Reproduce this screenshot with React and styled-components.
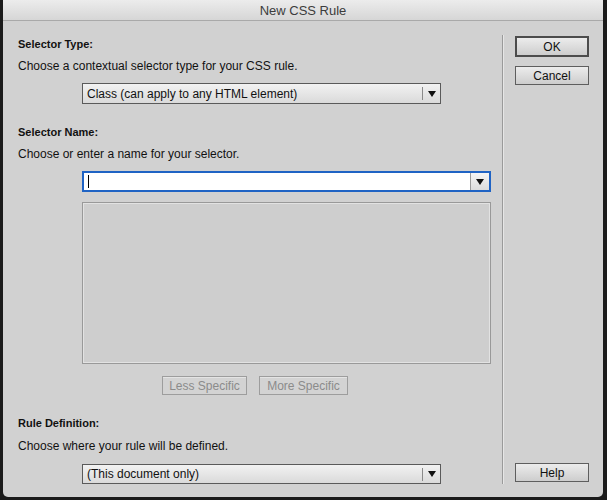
import React from 'react';
import styled, { createGlobalStyle } from 'styled-components';

const GlobalStyle = createGlobalStyle`
  html, body {
    margin: 0;
    padding: 0;
    background: #1b1b1b;
    font-family: "Liberation Sans", Arial, sans-serif;
  }
`;

const Dialog = styled.div`
  margin-left: 3px;
  width: 600px;
  height: 497px;
  background: #d1d1d1;
  border-radius: 0 0 5px 5px;
  display: flex;
  flex-direction: column;
  overflow: hidden;
`;

const TitleBar = styled.div`
  height: 20px;
  border-bottom: 1px solid #a9a9a9;
  background: linear-gradient(#ececec, #d6d6d6);
  display: flex;
  align-items: center;
  justify-content: center;
  font-size: 13px;
  color: #3c3c3c;
`;

const Body = styled.div`
  flex: 1;
  display: flex;
`;

const Main = styled.div`
  width: 499px;
  padding: 16px 0 0 15px;
  box-sizing: border-box;
  display: flex;
  flex-direction: column;
`;

const Label = styled.div`
  font-size: 11px;
  line-height: 14px;
  font-weight: bold;
  color: #111;
  margin-top: ${(p) => p.$gap || 0}px;
`;

const Hint = styled.div`
  font-size: 12px;
  line-height: 14px;
  color: #111;
  margin-top: ${(p) => p.$gap || 8}px;
`;

const Select = styled.div`
  margin: ${(p) => p.$gap}px 0 0 64px;
  width: 359px;
  height: ${(p) => p.$h || 21}px;
  box-sizing: border-box;
  border: 1px solid #5a5a5a;
  background: linear-gradient(#f2f2f2, #dadada);
  display: flex;
  align-items: center;
  font-size: 12px;
  color: #111;
`;

const SelectText = styled.span`
  flex: 1;
  padding-left: 4px;
`;

const ArrowCell = styled.span`
  width: 17px;
  height: 13px;
  border-left: 1px solid #8a8a8a;
  display: flex;
  align-items: center;
  justify-content: center;
`;

const Arrow = () => (
  <svg width="8" height="6" viewBox="0 0 8 6">
    <path d="M0 0h8L4 6z" fill="#111" />
  </svg>
);

const Combo = styled.div`
  margin: 10px 0 0 64px;
  width: 409px;
  height: 21px;
  box-sizing: border-box;
  border: 2px solid #1f63c4;
  display: flex;
`;

const ComboInput = styled.div`
  flex: 1;
  background: #fff;
  border-right: 1px solid #9a9a9a;
  display: flex;
  align-items: center;
  padding-left: 4px;
`;

const Caret = styled.span`
  width: 1px;
  height: 13px;
  background: #000;
`;

const ComboButton = styled.div`
  width: 18px;
  background: linear-gradient(#f4f4f4, #dcdcdc);
  display: flex;
  align-items: center;
  justify-content: center;
`;

const ListBox = styled.div`
  margin: 10px 0 0 64px;
  width: 409px;
  height: 162px;
  box-sizing: border-box;
  border: 1px solid #999;
  box-shadow: inset 0 0 0 1px #e2e2e2;
  background: #cecece;
`;

const SpecificRow = styled.div`
  margin: 12px 0 0 144px;
  display: flex;
  gap: 12px;
`;

const FlatButton = styled.div`
  height: 19px;
  width: ${(p) => p.$w}px;
  box-sizing: border-box;
  border: 1px solid #9d9d9d;
  box-shadow: inset 0 1px 0 #e4e4e4;
  background: #d3d3d3;
  color: #8b8b8b;
  font-size: 12px;
  display: flex;
  align-items: center;
  justify-content: center;
`;

const Separator = styled.div`
  width: 1px;
  margin: 14px 0 13px;
  background: #9a9a9a;
  box-shadow: 1px 0 0 #e6e6e6;
`;

const Side = styled.div`
  flex: 1;
  padding: 15px 0 15px 12px;
  display: flex;
  flex-direction: column;
  gap: 9px;
`;

const PushButton = styled.div`
  width: 74px;
  height: ${(p) => (p.$default ? 21 : 19)}px;
  box-sizing: border-box;
  border: ${(p) => (p.$default ? '2px solid #4c4c4c' : '1px solid #5e5e5e')};
  background: linear-gradient(#ececec, #cdcdcd);
  font-size: 12px;
  color: #111;
  display: flex;
  align-items: center;
  justify-content: center;
  margin-top: ${(p) => (p.$bottom ? 'auto' : '0')};
`;

export default function App() {
  return (
    <>
      <GlobalStyle />
      <Dialog>
        <TitleBar>New CSS Rule</TitleBar>
        <Body>
          <Main>
            <Label>Selector Type:</Label>
            <Hint>Choose a contextual selector type for your CSS rule.</Hint>
            <Select $gap={10}>
              <SelectText>Class (can apply to any HTML element)</SelectText>
              <ArrowCell>
                <Arrow />
              </ArrowCell>
            </Select>

            <Label $gap={21}>Selector Name:</Label>
            <Hint>Choose or enter a name for your selector.</Hint>
            <Combo>
              <ComboInput>
                <Caret />
              </ComboInput>
              <ComboButton>
                <Arrow />
              </ComboButton>
            </Combo>
            <ListBox />
            <SpecificRow>
              <FlatButton $w={85}>Less Specific</FlatButton>
              <FlatButton $w={89}>More Specific</FlatButton>
            </SpecificRow>

            <Label $gap={21}>Rule Definition:</Label>
            <Hint $gap={9}>Choose where your rule will be defined.</Hint>
            <Select $gap={11} $h={20}>
              <SelectText>(This document only)</SelectText>
              <ArrowCell>
                <Arrow />
              </ArrowCell>
            </Select>
          </Main>
          <Separator />
          <Side>
            <PushButton $default>OK</PushButton>
            <PushButton>Cancel</PushButton>
            <PushButton $bottom>Help</PushButton>
          </Side>
        </Body>
      </Dialog>
    </>
  );
}
